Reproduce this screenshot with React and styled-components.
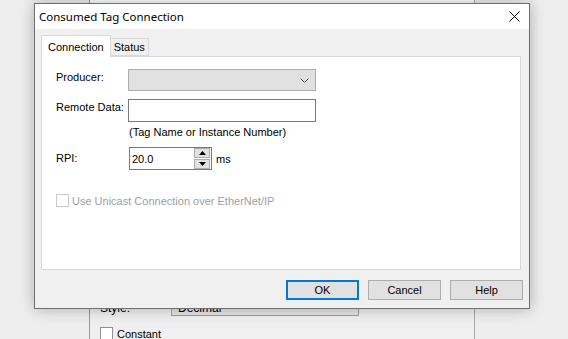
import React, { useState } from "react";
import styled, { createGlobalStyle } from "styled-components";

const GlobalStyle = createGlobalStyle`
  html, body {
    margin: 0;
    padding: 0;
    background: #efefef;
    overflow: hidden;
  }
  #root {
    width: 568px;
    height: 339px;
  }
`;

const Desktop = styled.div`
  position: relative;
  width: 568px;
  height: 339px;
  overflow: hidden;
  background: #eeeeee;
  font-family: "Liberation Sans", Arial, sans-serif;
  font-size: 11px;
  color: #000;
`;

/* window behind the dialog */
const BackWindow = styled.div`
  position: absolute;
  left: 89px;
  top: -40px;
  width: 384px;
  height: 400px;
  background: #f0f0f0;
  border-left: 1px solid #9a9a9a;
  border-right: 1px solid #a8a8a8;
  display: flex;
  flex-direction: column;
`;

const BackTitle = styled.div`
  height: 70px;
  background: #ffffff;
`;

const BackBody = styled.div`
  flex: 1;
  padding: 265px 0 0 10px;
  display: flex;
  flex-direction: column;
  gap: 11px;
`;

const BackRow = styled.div`
  display: flex;
  align-items: center;
  font-size: 11px;
`;

const BackLabel = styled.span`
  width: 71px;
  font-size: 12px;
  padding-top: 4px;
`;

const BackSelect = styled.div`
  width: 188px;
  height: 21px;
  border: 1px solid #a0a0a0;
  background: #e5e5e5;
  padding: 3px 0 0 6px;
  box-sizing: border-box;
  line-height: 19px;
  font-size: 12px;
`;

const BackCheck = styled.span`
  width: 13px;
  height: 13px;
  box-sizing: border-box;
  background: #fff;
  border: 1px solid #8f8f8f;
  margin-right: 4px;
`;

const Dialog = styled.div`
  position: absolute;
  left: 34px;
  top: 3px;
  width: 496px;
  height: 306px;
  box-sizing: border-box;
  border: 1px solid #6f6f6f;
  background: #f0f0f0;
  box-shadow: 0 0 14px rgba(0, 0, 0, 0.28);
  display: flex;
  flex-direction: column;
`;

const TitleBar = styled.div`
  height: 25px;
  background: #ffffff;
  display: flex;
  align-items: center;
  justify-content: space-between;
  padding: 0 0 0 4px;
  font-family: "Noto Sans", "Open Sans", sans-serif;
  font-size: 11.5px;
`;

const TitleText = styled.span``;

const CloseButton = styled.button`
  width: 30px;
  height: 25px;
  border: none;
  background: transparent;
  display: flex;
  align-items: center;
  justify-content: center;
  padding: 0;
`;

const Body = styled.div`
  flex: 1;
  display: flex;
  flex-direction: column;
  padding: 6px 8px 0 6px;
`;

const TabStrip = styled.div`
  display: flex;
  align-items: flex-end;
  height: 21px;
  position: relative;
  z-index: 1;
`;

const Tab = styled.div`
  box-sizing: border-box;
  height: ${(p) => (p.$active ? "22px" : "18px")};
  padding: 0 ${(p) => (p.$active ? "6px" : "3px")};
  background: ${(p) => (p.$active ? "#ffffff" : "#f0f0f0")};
  border: 1px solid #d9d9d9;
  border-bottom: ${(p) => (p.$active ? "none" : "1px solid #d9d9d9")};
  margin-left: ${(p) => (p.$active ? "0" : "-1px")};
  display: flex;
  align-items: center;
  font-size: 11px;
  margin-bottom: ${(p) => (p.$active ? "-1px" : "0")};
`;

const Panel = styled.div`
  box-sizing: border-box;
  height: 214px;
  background: #ffffff;
  border: 1px solid #d9d9d9;
  padding: 12px 0 0 14px;
  display: flex;
  flex-direction: column;
`;

const FormGrid = styled.div`
  display: grid;
  grid-template-columns: 72px 188px auto;
  align-items: start;
`;

const Label = styled.span`
  font-size: 11px;
  line-height: 13px;
  margin-top: ${(p) => p.$mt};
`;

const Combo = styled.div`
  box-sizing: border-box;
  height: 22px;
  background: #e1e1e1;
  border: 1px solid #adadad;
  display: flex;
  align-items: center;
  justify-content: flex-end;
  padding-right: 6px;
`;

const TextBox = styled.input`
  box-sizing: border-box;
  height: 23px;
  width: 188px;
  border: 1px solid #7a7a7a;
  background: #fff;
  margin: 8px 0 0 0;
  font-family: "Liberation Sans", Arial, sans-serif;
  font-size: 11px;
  padding: 0 3px;
  outline: none;
`;

const Hint = styled.span`
  grid-column: 2 / 4;
  font-size: 11px;
  line-height: 13px;
  margin: 4px 0 0 1px;
`;

const SpinWrap = styled.div`
  display: flex;
  align-items: center;
  gap: 4px;
  margin-top: 8px;
  grid-column: 2 / 4;
`;

const Spinner = styled.div`
  box-sizing: border-box;
  width: 83px;
  height: 23px;
  border: 1px solid #7a7a7a;
  background: #fff;
  display: flex;
  align-items: center;
  justify-content: space-between;
  padding: 0 1px 0 2px;
  margin-left: 1px;
  font-size: 11px;
`;

const SpinButtons = styled.div`
  display: flex;
  flex-direction: column;
  gap: 1px;
`;

const SpinButton = styled.div`
  box-sizing: border-box;
  width: 16px;
  height: 10px;
  background: #e1e1e1;
  border: 1px solid #adadad;
  display: flex;
  align-items: center;
  justify-content: center;
`;

const Unit = styled.span`
  font-size: 11px;
`;

const CheckRow = styled.label`
  display: flex;
  align-items: center;
  gap: 3px;
  margin-top: 24px;
  color: #a0a0a0;
  font-size: 11px;
`;

const CheckBox = styled.span`
  box-sizing: border-box;
  width: 13px;
  height: 13px;
  border: 1px solid #cccccc;
  background: #fff;
`;

const ButtonRow = styled.div`
  display: flex;
  justify-content: flex-end;
  gap: 9px;
  padding: 10px 0 0 0;
  margin-right: -2px;
`;

const DialogButton = styled.button`
  box-sizing: border-box;
  width: 73px;
  height: 20px;
  background: #e1e1e1;
  border: ${(p) => (p.$default ? "2px solid #0078d7" : "1px solid #adadad")};
  font-family: "Liberation Sans", Arial, sans-serif;
  font-size: 11px;
  color: #000;
  padding: 0;
`;

const CloseIcon = () => (
  <svg width="11" height="11" viewBox="0 0 11 11">
    <path d="M0.5 0.5 L10.5 10.5 M10.5 0.5 L0.5 10.5" stroke="#000" strokeWidth="1" fill="none" />
  </svg>
);

const Chevron = () => (
  <svg width="9" height="5" viewBox="0 0 9 5">
    <path d="M0.5 0.5 L4.5 4.5 L8.5 0.5" stroke="#606060" strokeWidth="1" fill="none" />
  </svg>
);

const Arrow = ({ up }) => (
  <svg width="7" height="4" viewBox="0 0 7 4">
    <path d={up ? "M3.5 0 L7 4 L0 4 Z" : "M0 0 L7 0 L3.5 4 Z"} fill="#000" />
  </svg>
);

export default function App() {
  const [tab, setTab] = useState("Connection");
  const [remote, setRemote] = useState("");

  return (
    <Desktop>
      <GlobalStyle />
      <BackWindow>
        <BackTitle />
        <BackBody>
          <BackRow>
            <BackLabel>Style:</BackLabel>
            <BackSelect>Decimal</BackSelect>
          </BackRow>
          <BackRow>
            <BackCheck />
            <span>Constant</span>
          </BackRow>
        </BackBody>
      </BackWindow>

      <Dialog>
        <TitleBar>
          <TitleText>Consumed Tag Connection</TitleText>
          <CloseButton>
            <CloseIcon />
          </CloseButton>
        </TitleBar>
        <Body>
          <TabStrip>
            {["Connection", "Status"].map((t) => (
              <Tab key={t} $active={tab === t} onClick={() => setTab(t)}>
                {t}
              </Tab>
            ))}
          </TabStrip>
          <Panel>
            <FormGrid>
              <Label $mt="2px">Producer:</Label>
              <Combo>
                <Chevron />
              </Combo>
              <span />
              <Label $mt="10px">Remote Data:</Label>
              <TextBox value={remote} onChange={(e) => setRemote(e.target.value)} />
              <span />
              <span />
              <Hint>(Tag Name or Instance Number)</Hint>
              <Label $mt="13px">RPI:</Label>
              <SpinWrap>
                <Spinner>
                  <span>20.0</span>
                  <SpinButtons>
                    <SpinButton>
                      <Arrow up />
                    </SpinButton>
                    <SpinButton>
                      <Arrow />
                    </SpinButton>
                  </SpinButtons>
                </Spinner>
                <Unit>ms</Unit>
              </SpinWrap>
            </FormGrid>
            <CheckRow>
              <CheckBox />
              <span>Use Unicast Connection over EtherNet/IP</span>
            </CheckRow>
          </Panel>
          <ButtonRow>
            <DialogButton $default>OK</DialogButton>
            <DialogButton>Cancel</DialogButton>
            <DialogButton>Help</DialogButton>
          </ButtonRow>
        </Body>
      </Dialog>
    </Desktop>
  );
}
